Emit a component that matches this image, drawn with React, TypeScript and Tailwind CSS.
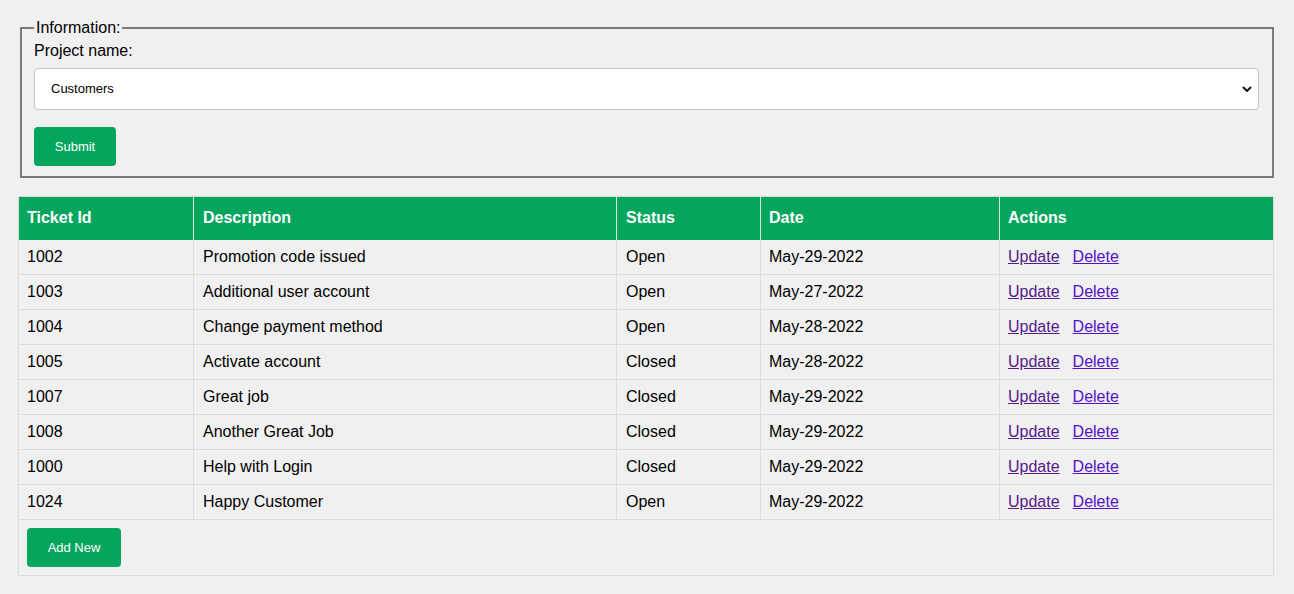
import { useState } from 'react';

interface Ticket {
  id: string;
  description: string;
  status: 'Open' | 'Closed';
  date: string;
}

const TICKETS: Ticket[] = [
  { id: '1002', description: 'Promotion code issued', status: 'Open', date: 'May-29-2022' },
  { id: '1003', description: 'Additional user account', status: 'Open', date: 'May-27-2022' },
  { id: '1004', description: 'Change payment method', status: 'Open', date: 'May-28-2022' },
  { id: '1005', description: 'Activate account', status: 'Closed', date: 'May-28-2022' },
  { id: '1007', description: 'Great job', status: 'Closed', date: 'May-29-2022' },
  { id: '1008', description: 'Another Great Job', status: 'Closed', date: 'May-29-2022' },
  { id: '1000', description: 'Help with Login', status: 'Closed', date: 'May-29-2022' },
  { id: '1024', description: 'Happy Customer', status: 'Open', date: 'May-29-2022' },
];

export default function App() {
  const [project, setProject] = useState('Customers');

  return (
    <div className="min-h-[594px] bg-[#f0f0f0] pl-[18px] pr-[20px] pt-[19px] pb-4 font-['Liberation_Sans',Arial,sans-serif] text-black">
      {/* Project picker */}
      <fieldset className="ml-[2px] border-2 border-[#7a7a7a] px-[12px] pb-[10px] pt-0">
        <legend className="px-[2px] text-[16px] leading-[18px]">Information:</legend>
        <label htmlFor="project" className="block text-[16px] leading-[18px] mt-[5px]">
          Project name:
        </label>
        <div className="relative mt-[8px] mr-[1px]">
          <select
            id="project"
            value={project}
            onChange={(e) => setProject(e.target.value)}
            className="block w-full h-[42px] appearance-none rounded-[4px] border border-[#c4c4c4] bg-white pl-[16px] pr-8 text-[13px] outline-none"
          >
            <option>Customers</option>
            <option>Billing</option>
            <option>Support</option>
          </select>
          <svg
            className="pointer-events-none absolute right-[6px] top-[15px]"
            width="12"
            height="12"
            viewBox="0 0 12 12"
            fill="none"
          >
            <path d="M2.5 4.5 6 8l3.5-3.5" stroke="#1a1a1a" strokeWidth="2" strokeLinecap="round" strokeLinejoin="round" />
          </svg>
        </div>
        <button className="mt-[17px] h-[39px] w-[82px] rounded-[4px] bg-[#04a55d] text-[13px] text-white">
          Submit
        </button>
      </fieldset>

      {/* Tickets */}
      <table className="mt-[18px] w-full table-fixed border-collapse border border-[#dcdcdc] text-[16px]">
        <thead>
          <tr className="h-[43px] bg-[#04a55d] text-left text-white">
            <th className="w-[175px] border-r border-[#d8efe2] pl-[8px] font-bold">Ticket Id</th>
            <th className="w-[423px] border-r border-[#d8efe2] pl-[9px] font-bold">Description</th>
            <th className="w-[144px] border-r border-[#d8efe2] pl-[9px] font-bold">Status</th>
            <th className="w-[239px] border-r border-[#d8efe2] pl-[8px] font-bold">Date</th>
            <th className="pl-[8px] font-bold">Actions</th>
          </tr>
        </thead>
        <tbody>
          {TICKETS.map((t) => (
            <tr key={t.id} className="h-[35px] border-b border-[#dcdcdc]">
              <td className="border-r border-[#dcdcdc] pl-[8px]">{t.id}</td>
              <td className="border-r border-[#dcdcdc] pl-[9px]">{t.description}</td>
              <td className="border-r border-[#dcdcdc] pl-[9px]">{t.status}</td>
              <td className="border-r border-[#dcdcdc] pl-[8px]">{t.date}</td>
              <td className="pl-[8px]">
                <a href="#" className="text-[#551a8b] underline">Update</a>
                <a href="#" className="ml-[13px] text-[#5314c8] underline">Delete</a>
              </td>
            </tr>
          ))}
          <tr>
            <td colSpan={5} className="px-[8px] pt-[8px] pb-[8px]">
              <button className="h-[39px] w-[94px] rounded-[4px] bg-[#04a55d] text-[13px] text-white">
                Add New
              </button>
            </td>
          </tr>
        </tbody>
      </table>
    </div>
  );
}
